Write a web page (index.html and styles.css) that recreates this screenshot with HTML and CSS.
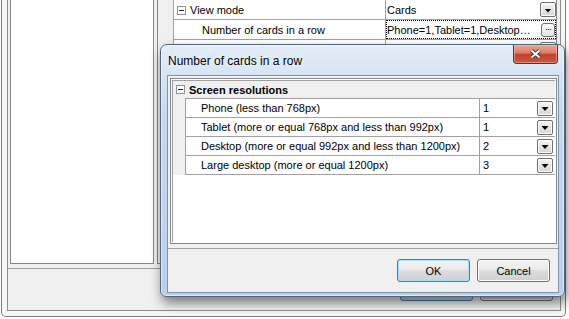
FILE: index.html
```html
<!DOCTYPE html>
<html>
<head>
<meta charset="utf-8">
<link rel="stylesheet" href="styles.css">
</head>
<body>
<div class="frame">
  <div class="client">
    <div class="main">
      <div class="list"></div>
      <div class="pgrid">
        <div class="prows">
          <div class="prow">
            <div class="pname cat-name"><span class="exp"></span>View mode</div>
            <div class="pval"><span>Cards</span><span class="dd"></span></div>
          </div>
          <div class="prow">
            <div class="pname sub">Number of cards in a row</div>
            <div class="pval focus"><span>Phone=1,Tablet=1,Desktop…</span><span class="ell">···</span></div>
          </div>
          <div class="prow">
            <div class="pname sub"></div>
            <div class="pval"><span></span><span class="dd"></span></div>
          </div>
        </div>
      </div>
    </div>
    <div class="bar">
      <button class="btn def">OK</button>
      <button class="btn">Cancel</button>
    </div>
  </div>
</div>

<div class="dialog">
  <div class="titlebar">
    <span class="title">Number of cards in a row</span>
    <span class="close"><svg width="13" height="10" viewBox="0 0 13 10"><path d="M2.5 1.5L10.5 8.5M10.5 1.5L2.5 8.5" stroke="#3a3a3a" stroke-width="4"/><path d="M2.5 1.5L10.5 8.5M10.5 1.5L2.5 8.5" stroke="#fff" stroke-width="2"/></svg></span>
  </div>
  <div class="dclient">
    <div class="dgrid">
      <div class="dgin">
        <div class="cat"><span class="exp"></span>Screen resolutions</div>
        <div class="dbody">
          <div class="dgut"></div>
          <div class="dlist">
            <div class="drow"><div class="dname">Phone (less than 768px)</div><div class="dval"><span>1</span><span class="dd"></span></div></div>
            <div class="drow"><div class="dname">Tablet (more or equal 768px and less than 992px)</div><div class="dval"><span>1</span><span class="dd"></span></div></div>
            <div class="drow"><div class="dname">Desktop (more or equal 992px and less than 1200px)</div><div class="dval"><span>2</span><span class="dd"></span></div></div>
            <div class="drow"><div class="dname">Large desktop (more or equal 1200px)</div><div class="dval"><span>3</span><span class="dd"></span></div></div>
          </div>
        </div>
      </div>
    </div>
    <div class="dfoot">
      <button class="btn def">OK</button>
      <button class="btn">Cancel</button>
    </div>
  </div>
</div>
</body>
</html>
```
FILE: styles.css
```css
* { box-sizing: border-box; }
html, body { margin: 0; padding: 0; }
body {
  width: 569px;
  height: 319px;
  overflow: hidden;
  position: relative;
  background: #fff;
  font-family: "Liberation Sans", Arial, sans-serif;
  font-size: 11px;
  color: #000;
}

/* parent window */
.frame {
  margin-left: 1px;
  width: 565px;
  height: 317px;
  border: 1px solid #7d7d7d;
  border-top: none;
  border-radius: 0 0 5px 5px;
  background: #f7f7f7;
  padding: 0 4px 5px 5px;
}
.client {
  height: 311px;
  border: 1px solid #8e8f8f;
  border-top: none;
  background: #f0f0f0;
  display: flex;
  flex-direction: column;
}
.main {
  flex: none;
  height: 264px;
  display: flex;
  gap: 3px;
  padding: 0 3px 0 2px;
}
.list {
  width: 144px;
  background: #fff;
  border: 1px solid #828790;
  border-top: none;
}
.pgrid {
  width: 400px;
  border: 1px solid #828790;
  border-top: none;
  background: #f0f0f0;
  padding-left: 15px;
}
.prows {
  height: 100%;
  background: #fff;
  border-left: 1px solid #a0a0a0;
}
.prow {
  display: flex;
  height: 20px;
  border-bottom: 1px solid #a0a0a0;
}
.pname {
  width: 212px;
  border-right: 1px solid #a0a0a0;
  display: flex;
  align-items: center;
  padding-top: 1px;
  white-space: nowrap;
}
.cat-name { padding-left: 3px; }
.sub { padding-left: 28px; }
.pval {
  flex: 1;
  display: flex;
  align-items: center;
  justify-content: space-between;
  padding-left: 1px;
  white-space: nowrap;
}
.pval span:first-child { padding-top: 1px; }
.pval.focus {
  outline: 1px dotted #000;
  outline-offset: -1px;
  padding-right: 1px;
}

.exp {
  width: 9px;
  height: 9px;
  border: 1px solid #919191;
  background: #fff;
  position: relative;
  margin-right: 4px;
  flex: none;
}
.exp::after {
  content: "";
  position: absolute;
  left: 1px;
  top: 3px;
  width: 5px;
  height: 1px;
  background: #222;
}

.dd {
  width: 16px;
  height: 15px;
  border: 1px solid #707070;
  border-radius: 2px;
  background: linear-gradient(#f7f7f7, #e4e4e4 50%, #d6d6d6);
  box-shadow: inset 0 0 0 1px #fff;
  display: flex;
  align-items: center;
  justify-content: center;
  flex: none;
}
.dd::after {
  content: "";
  width: 7px;
  height: 4px;
  margin-top: 2px;
  background: #000;
  clip-path: polygon(0 0, 100% 0, 50% 100%);
}
.ell {
  width: 14px;
  height: 14px;
  border: 1px solid #707070;
  border-radius: 3px;
  background: linear-gradient(#fafafa, #e6e6e6);
  font-size: 9px;
  line-height: 10px;
  text-align: center;
  letter-spacing: -1px;
  flex: none;
}

.bar {
  flex: none;
  margin-top: 4px;
  height: 42px;
  border-top: 1px solid #a0a0a0;
  display: flex;
  justify-content: flex-end;
  gap: 7px;
  padding: 9px 7px 0 0;
}

.btn {
  width: 73px;
  height: 23px;
  border: 1px solid #707070;
  border-radius: 3px;
  background: linear-gradient(#f2f2f2, #ebebeb 45%, #dddddd 50%, #cfcfcf);
  box-shadow: inset 0 0 0 1px #fcfcfc;
  font-family: "Liberation Sans", Arial, sans-serif;
  font-size: 11px;
  color: #000;
  padding: 0;
  margin: 0;
}
.btn.def {
  border-color: #3c7fb1;
  box-shadow: inset 0 0 0 1px #a6e0fa;
}

/* dialog window */
.dialog {
  position: absolute;
  left: 160px;
  top: 44px;
  width: 405px;
  height: 253px;
  border: 1px solid #53657a;
  border-radius: 7px 7px 6px 6px;
  background: linear-gradient(180deg, #e3edf8 0px, #d6e5f5 28px, #c4d9f0 70px, #b8d0ec 100%);
  box-shadow: inset 0 0 0 1px rgba(255,255,255,0.55), 2px 6px 12px rgba(0,0,0,0.5);
  display: flex;
  flex-direction: column;
}
.titlebar {
  flex: none;
  height: 30px;
  position: relative;
  display: flex;
  align-items: center;
  padding: 1px 0 0 7px;
}
.title {
  font-size: 12px;
  color: #000;
  text-shadow: 0 0 6px #fff;
}
.close {
  position: absolute;
  top: 0;
  right: 6px;
  width: 45px;
  height: 19px;
  border: 1px solid #6b2c22;
  border-top: none;
  border-radius: 0 0 4px 4px;
  background: linear-gradient(#e9a797, #dc7b66 45%, #c4432c 52%, #cf553c);
  box-shadow: inset 0 0 0 1px rgba(255,200,190,0.5);
  display: flex;
  align-items: center;
  justify-content: center;
}
.close svg { display: block; }

.dclient {
  flex: 1;
  margin: 0 5px 3px 6px;
  border: 1px solid #7f93a9;
  background: #f0f0f0;
  display: flex;
  flex-direction: column;
}
.dgrid {
  flex: none;
  height: 166px;
  margin: 2px 1px 0 2px;
  border: 1px solid #828790;
  padding: 1px;
  background: #fff;
}
.dgin {
  height: 100%;
  border-top: 1px solid #a0a0a0;
  border-left: 1px solid #a0a0a0;
  background: #fff;
}
.cat {
  height: 17px;
  background: #f0f0f0;
  display: flex;
  align-items: center;
  padding-left: 3px;
  font-weight: bold;
  font-size: 11px;
}
.dbody { display: flex; }
.dgut { width: 12px; background: #f0f0f0; }
.dlist {
  flex: 1;
  border-left: 1px solid #a0a0a0;
  border-bottom: 1px solid #a0a0a0;
}
.drow {
  display: flex;
  height: 19px;
  border-top: 1px solid #a0a0a0;
}
.dname {
  width: 294px;
  border-right: 1px solid #a0a0a0;
  padding-left: 15px;
  display: flex;
  align-items: center;
  white-space: nowrap;
}
.dval {
  flex: 1;
  display: flex;
  align-items: center;
  justify-content: space-between;
  padding: 0 2px 0 3px;
}

.dfoot {
  flex: 1;
  margin-top: 4px;
  border-top: 1px solid #a0a0a0;
  display: flex;
  justify-content: flex-end;
  align-items: flex-start;
  gap: 7px;
  padding: 10px 8px 0 0;
}
```
